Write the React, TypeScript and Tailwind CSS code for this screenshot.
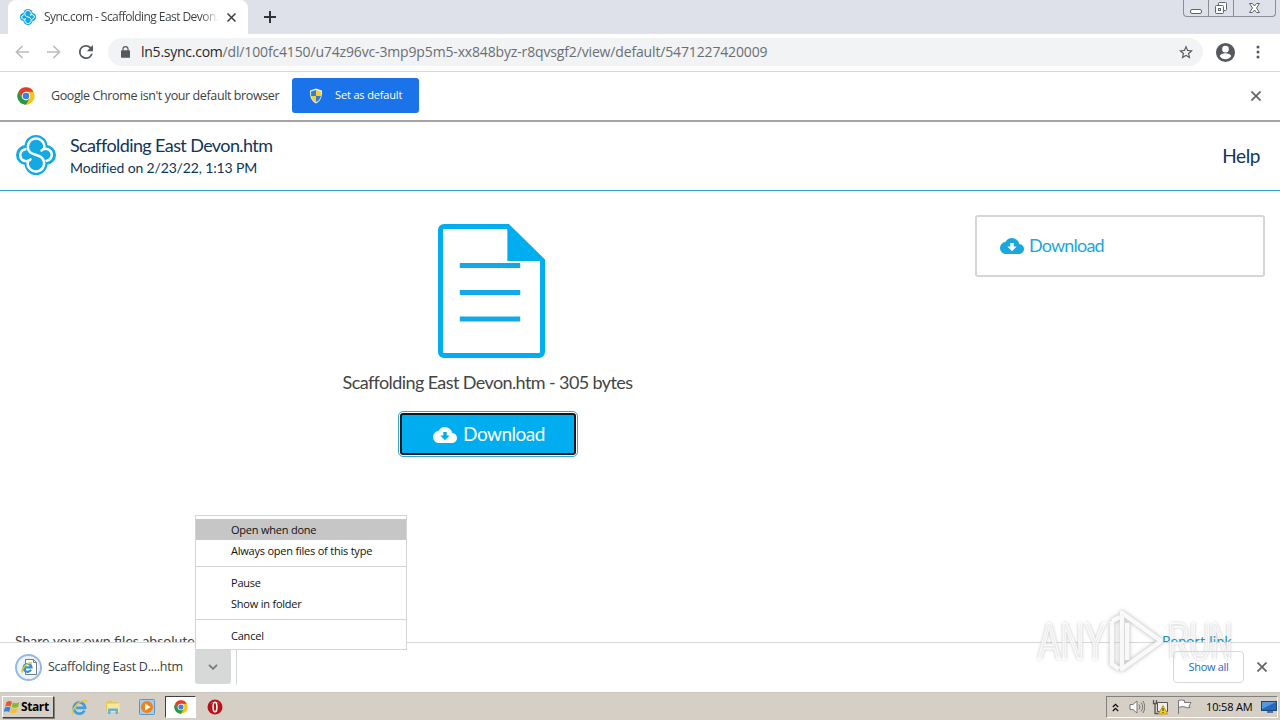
import { useState } from 'react'
import type { ReactNode } from 'react'

const MENU_GROUPS = [
  ['Open when done', 'Always open files of this type'],
  ['Pause', 'Show in folder'],
  ['Cancel'],
]

function SyncLogo({ className }: { className: string }) {
  return (
    <svg viewBox="0 0 40 40" className={className} fill="none">
      <g fill="#13a9e1">
        <circle cx="20" cy="11.500" r="11.500" />
        <circle cx="20" cy="28.500" r="11.500" />
        <circle cx="10" cy="20" r="10" />
        <circle cx="30" cy="20" r="10" />
      </g>
      <g stroke="#fff" strokeWidth="2.500" strokeLinecap="round">
        <path d="M28 14A8.200 8.200 0 1 0 14 17.200C17 20 22.500 19.500 26 22.800A8.200 8.200 0 1 1 12 26" />
        <path d="M9.500 14.200A6 6 0 1 0 14.500 24.300" />
        <path d="M30.500 25.800A6 6 0 1 0 25.500 15.700" />
      </g>
    </svg>
  )
}

function ChromeLogo({ className }: { className: string }) {
  return (
    <svg viewBox="0 0 24 24" className={className}>
      <circle cx="12" cy="12" r="11.500" fill="#fbc116" />
      <path d="M2.040 6.250A11.500 11.500 0 0 1 21.960 6.250H12L7 14.900Z" fill="#e33b2e" />
      <path d="M2.040 6.250A11.500 11.500 0 0 0 12 23.500L17 14.900 12 18 7 14.900Z" fill="#229a4a" />
      <circle cx="12" cy="12" r="5.700" fill="#fff" />
      <circle cx="12" cy="12" r="4.400" fill="#3f7de8" />
    </svg>
  )
}

function CloudDownload({ className, arrow }: { className: string; arrow: string }) {
  return (
    <svg viewBox="0 0 24 16" className={className}>
      <path d="M19.350 6.040A7.490 7.490 0 0 0 12 0C9.110 0 6.600 1.640 5.350 4.040A5.994 5.994 0 0 0 0 10c0 3.310 2.690 6 6 6h13c2.760 0 5-2.240 5-5 0-2.640-2.050-4.780-4.650-4.960z" fill="currentColor" />
      <path d="M10.300 5h3.400v3.600h3L12 13.300 7.300 8.600h3z" fill={arrow} />
    </svg>
  )
}

function Cross({ className }: { className: string }) {
  return (
    <svg viewBox="0 0 10 10" className={className} stroke="currentColor" strokeWidth="1.700">
      <path d="M.5.500l9 9M9.500.500l-9 9" />
    </svg>
  )
}

function IeLogo({ className }: { className: string }) {
  return (
    <svg viewBox="0 0 18 18" className={className} fill="none">
      <path d="M14.300 12.200A6 6 0 1 1 14.900 9.400H5.500" stroke="#3b9fe0" strokeWidth="2.800" />
      <path d="M2.500 16.200C-.5 14 4 6.500 9.500 3.300 13 1.200 16.800.3 16.800 3.700" stroke="#efc337" strokeWidth="1.500" />
    </svg>
  )
}

function WindowControls() {
  return (
    <div className="mr-1 flex h-[17px] w-[93px] rounded-b border border-t-0 border-[#8b8e95] text-[#62656b]">
      <div className="flex w-[25px] items-center justify-center border-r border-[#8b8e95]">
        <svg viewBox="0 0 14 14" className="h-3.5 w-3.5" fill="#fff" stroke="currentColor">
          <rect x="1.500" y="8.500" width="11" height="4" rx="1.500" />
        </svg>
      </div>
      <div className="flex w-[25px] items-center justify-center border-r border-[#8b8e95]">
        <svg viewBox="0 0 14 14" className="h-3.5 w-3.5" fill="#fff" stroke="currentColor">
          <rect x="4.500" y="1.500" width="8" height="8" rx="1" />
          <rect x="1.500" y="4.500" width="8" height="8" rx="1" />
          <rect x="4.500" y="7.500" width="2" height="2" />
        </svg>
      </div>
      <div className="flex flex-1 items-center justify-center">
        <svg viewBox="0 0 13 12" className="h-3 w-[13px]" fill="#fff" stroke="currentColor">
          <path d="M1.500 1.500h3l2 2.500 2-2.500h3l-3 4.500 3 4.500h-3l-2-2.500-2 2.500h-3l3-4.500z" />
        </svg>
      </div>
    </div>
  )
}

function TabStrip() {
  return (
    <div className="flex h-[34px] items-start bg-[#dee1e9] pl-2">
      <div className="flex h-[34px] w-[240px] items-center rounded-t-lg bg-white pl-3 pr-3">
        <SyncLogo className="h-4 w-4 shrink-0" />
        <div className="ml-2 w-[175px] overflow-hidden whitespace-nowrap bg-gradient-to-r from-[#3c4043] from-90% to-transparent bg-clip-text text-[12px] tracking-[-0.56px] text-transparent">
          Sync.com - Scaffolding East Devon.htm
        </div>
        <Cross className="ml-auto h-[9px] w-[9px] text-[#3c4043]" />
      </div>
      <svg viewBox="0 0 12 12" className="ml-4 mt-[11px] h-3 w-3" stroke="#303338" strokeWidth="2">
        <path d="M6 0v12M0 6h12" />
      </svg>
      <div className="ml-auto">
        <WindowControls />
      </div>
    </div>
  )
}

function Toolbar() {
  return (
    <div className="flex h-[38px] items-center border-b border-[#d6d8dc] bg-white pb-px pl-[15px] pr-5">
      <svg viewBox="0 0 14 14" className="h-3.5 w-3.5" fill="none" stroke="#babcbe" strokeWidth="1.700">
        <path d="M14 7H1.500M7.500 1L1.500 7l6 6" />
      </svg>
      <svg viewBox="0 0 14 14" className="ml-[18px] h-3.5 w-3.5" fill="none" stroke="#babcbe" strokeWidth="1.700">
        <path d="M0 7h12.500M6.500 1l6 6-6 6" />
      </svg>
      <svg viewBox="4 4 16 16" className="ml-[18px] h-3.5 w-3.5" fill="#55585d">
        <path d="M17.650 6.350A7.958 7.958 0 0 0 12 4a8 8 0 1 0 7.730 10h-2.080A6 6 0 1 1 12 6c1.660 0 3.140.69 4.220 1.780L13 11h7V4z" />
      </svg>
      <div className="ml-[15px] flex h-7 w-[1095px] items-center rounded-full bg-[#f1f3f4] pl-[13px] pr-2.5">
        <svg viewBox="0 0 10 13" className="h-3 w-[9px]" fill="#55585d">
          <path d="M1 4.500h8a1 1 0 0 1 1 1V12a1 1 0 0 1-1 1H1a1 1 0 0 1-1-1V5.500a1 1 0 0 1 1-1z" />
          <path d="M2.200 5V3.300a2.800 2.800 0 0 1 5.600 0V5" fill="none" stroke="#55585d" strokeWidth="1.300" />
        </svg>
        <span className="ml-[11px] whitespace-nowrap pb-0.5 text-[14px] tracking-[-0.15px] text-[#6b6f74]">
          <span className="tracking-[-0.25px] text-[#25282c]">ln5.sync.com</span>/dl/100fc4150/u74z96vc-3mp9p5m5-xx848byz-r8qvsgf2/view/default/5471227420009
        </span>
        <svg viewBox="2 2 20 19" className="ml-auto h-3.5 w-3.5" fill="#55585d">
          <path d="M22 9.240l-7.190-.62L12 2 9.190 8.630 2 9.240l5.460 4.730L5.820 21 12 17.270 18.180 21l-1.630-7.030L22 9.240zM12 15.400l-3.760 2.270 1-4.280-3.320-2.880 4.380-.38L12 6.100l1.710 4.040 4.380.38-3.320 2.880 1 4.280L12 15.400z" />
        </svg>
      </div>
      <svg viewBox="2 2 20 20" className="ml-[13px] h-[19px] w-[19px]" fill="#55585d">
        <path d="M12 2a10 10 0 1 0 0 20 10 10 0 0 0 0-20zm0 3a3.500 3.500 0 1 1 0 7 3.500 3.500 0 0 1 0-7zm0 14.200a7.200 7.200 0 0 1-6-3.200c.03-2 4-3.100 6-3.100s5.970 1.100 6 3.100a7.200 7.200 0 0 1-6 3.200z" />
      </svg>
      <svg viewBox="0 0 4 14" className="ml-auto h-3.5 w-1" fill="#55585d">
        <circle cx="2" cy="2" r="1.500" />
        <circle cx="2" cy="7" r="1.500" />
        <circle cx="2" cy="12" r="1.500" />
      </svg>
    </div>
  )
}

function DefaultBrowserBar() {
  return (
    <div className="flex h-[50px] items-center border-b-2 border-[#a3a3a3] bg-white pb-px pl-[17px] pr-[19px]">
      <ChromeLogo className="h-[18px] w-[18px]" />
      <span className="ml-4 w-[241px] whitespace-nowrap pt-0.5 text-[12.500px] tracking-[-0.39px] text-[#3c4043]">
        Google Chrome isn't your default browser
      </span>
      <button type="button" className="flex h-[35px] w-[127px] items-center rounded-[3px] bg-[#1a73e8] pl-4 text-[11px] tracking-[-0.15px] text-white">
        <svg viewBox="0 0 16 16" className="mr-[11px] h-4 w-4">
          <path d="M8 .5L14 2.500C14.300 8 13 13 8 15.500 3 13 1.700 8 2 2.500z" fill="#e9eef4" />
          <path d="M8 2v6H3.100L3 3.500z" fill="#3a7bd0" />
          <path d="M8 2v6h4.900L13 3.500z" fill="#f5cf2c" />
          <path d="M8 8v6.300C5 12.700 3.500 10.500 3.100 8z" fill="#f5cf2c" />
          <path d="M8 8v6.300c3-1.600 4.500-3.800 4.900-6.300z" fill="#3a7bd0" />
        </svg>
        Set as default
      </button>
      <Cross className="ml-auto h-2.5 w-2.5 text-[#5f6368]" />
    </div>
  )
}

function FileHeader() {
  return (
    <header className="flex h-[69px] shrink-0 items-center border-b border-[#2b9fcb] bg-white pl-4 pr-5 font-[Lato,sans-serif] text-[#0f3559]">
      <SyncLogo className="mb-0.5 h-10 w-10" />
      <div className="ml-[14px] whitespace-nowrap pt-px">
        <div className="text-[18px] leading-[23px] tracking-[-0.6px]">Scaffolding East Devon.htm</div>
        <div className="text-[14px] leading-[22px] tracking-[-0.15px]">Modified on 2/23/22, 1:13 PM</div>
      </div>
      <a className="ml-auto text-[19px] tracking-[-0.4px]">Help</a>
    </header>
  )
}

function FilePreview() {
  return (
    <main className="flex flex-1 flex-col overflow-hidden bg-white font-[Lato,sans-serif]">
      <div className="flex items-start pr-[15px]">
        <section className="flex w-[975px] flex-col items-center pt-[33px]">
          <svg viewBox="0 0 108 134" preserveAspectRatio="none" className="ml-[7px] h-[134px] w-[107px]" fill="none">
            <path d="M70.500 2.500H6a3.500 3.500 0 0 0-3.500 3.500v122a3.500 3.500 0 0 0 3.500 3.500h96a3.500 3.500 0 0 0 3.500-3.500V36.500z" stroke="#00adee" strokeWidth="5" />
            <path d="M70 0l37 37H70z" fill="#00adee" />
            <path d="M22 41.500h61M22 68.500h61M22 95h61" stroke="#13a9e8" strokeWidth="5" />
          </svg>
          <p className="mt-3 whitespace-nowrap text-[18px] leading-6 tracking-[-0.6px] text-[#444]">
            Scaffolding East Devon.htm - 305 bytes
          </p>
          <button
            type="button"
            className="mt-[19px] flex h-[42px] w-[176px] items-center justify-center rounded-[3px] border-2 border-[#0a1a22] bg-[#00adee] pl-[3px] text-[19px] tracking-[-0.5px] text-white outline outline-offset-1 outline-[#3aa6cf]"
          >
            <CloudDownload className="mr-1.5 mt-0.5 h-4 w-6" arrow="#00adee" />
            Download
          </button>
        </section>
        <aside className="mt-6 flex h-[62px] flex-1 items-center rounded-[3px] border-2 border-[#d5d6d8] pb-0.5 pl-[23px] text-[18px] tracking-[-0.8px] text-[#1aa7dc]">
          <CloudDownload className="mr-[5px] mt-0.5 h-4 w-6" arrow="#fff" />
          Download
        </aside>
      </div>
      <footer className="mt-auto -mb-[11px] flex h-[25px] items-center justify-between pl-[15px] pr-12 text-[14px]">
        <span className="text-[#444]">Share your own files absolutely free</span>
        <a className="relative z-40 tracking-[0.3px] text-[#1496c4]">Report link</a>
      </footer>
    </main>
  )
}

function DownloadMenu() {
  return (
    <div className="absolute bottom-[70px] left-[195px] z-20 w-[212px] border border-[#d4d4d4] bg-white py-[3px] text-[11px] tracking-[-0.22px] text-[#111]">
      {MENU_GROUPS.map((group, i) => (
        <div key={group[0]} className={i > 0 ? 'mt-[5px] border-t border-[#d4d4d4] pt-[5px]' : ''}>
          {group.map((label) => (
            <div
              key={label}
              className={`flex h-[21px] items-center pl-[35px] pt-0.5 ${label === 'Open when done' ? 'bg-[#c6c6c6]' : ''}`}
            >
              {label}
            </div>
          ))}
        </div>
      ))}
    </div>
  )
}

function DownloadShelf({ open, onToggle }: { open: boolean; onToggle: () => void }) {
  return (
    <div className="flex h-[50px] items-center border-t border-[#d6d8da] bg-white pb-px pl-[15px] pr-[13px]">
      <div className="flex h-[27px] w-[27px] items-center justify-center rounded-full border-2 border-[#94b9e7] bg-[#edf4fc]">
        <svg viewBox="0 0 18 18" className="h-[18px] w-[18px] shrink-0" fill="none">
          <path d="M5.500 1.500h8l3 3v12h-11z" fill="#fff" stroke="#76797e" />
          <path d="M13.500 1.500v3h3" stroke="#76797e" />
          <path d="M11 11.800A4 4 0 1 1 11.500 9.300H4.500" stroke="#3191d4" strokeWidth="2.200" />
          <path d="M2.500 14.500C.5 12 6 4.800 12 4.800" stroke="#e8c62c" strokeWidth="1.500" />
        </svg>
      </div>
      <span className="ml-1.5 w-[147px] whitespace-nowrap text-[12.500px] tracking-[-0.24px] text-[#3c4043]">Scaffolding East D....htm</span>
      <button type="button" aria-expanded={open} onClick={onToggle} className="mb-px flex h-[35px] w-9 items-center justify-center rounded-[3px] bg-[#d7d9d9]">
        <svg viewBox="0 0 10 6" className="h-1.5 w-2.5" fill="none" stroke="#777b7e" strokeWidth="1.800">
          <path d="M1 .8l4 4 4-4" />
        </svg>
      </button>
      <div className="ml-[5px] h-9 w-px bg-[#d6d8da]" />
      <button type="button" className="relative z-40 ml-auto h-8 w-[71px] rounded border border-[#d6d8dc] text-[11px] tracking-[-0.3px] text-[#2867c7]">
        Show all
      </button>
      <Cross className="ml-[13px] h-2.5 w-2.5 text-[#5f6368]" />
    </div>
  )
}

function TaskItem({ children }: { children: ReactNode }) {
  return <div className="flex h-[22px] w-[34px] items-center justify-center">{children}</div>
}

function Taskbar() {
  return (
    <div className="flex h-7 items-center border-t border-[#c9c6c0] bg-[#d6cfc6] pt-px">
      <button type="button" className="ml-0.5 flex h-[22px] w-[52px] items-center border border-b-[#404040] border-l-white border-r-[#404040] border-t-white bg-[#d6cfc6] pl-px text-[12px] font-bold tracking-[-0.4px] text-black shadow-[1px_1px_0_#808080]">
        <svg viewBox="0 0 16 16" className="mr-px h-4 w-4 shrink-0">
          <path d="M2.500 3C5 1.500 6.500 2 8 3L6.700 7.500C5 6.500 3.500 6.500 1.200 7.500z" fill="#e7592b" />
          <path d="M9 3.400c2 1 4 1 6.300-.2L14 8c-2.500 1-4.500.9-6.300-.1z" fill="#7fba32" />
          <path d="M1 8.500c2-1 4-1 5.500 0L5.200 13C3.500 12 2 12-.3 13z" fill="#3684d8" />
          <path d="M7.400 8.900c2 1 4 1 6.300.1l-1.300 4.600c-2.500 1-4.500.9-6.300-.1z" fill="#f5c22d" />
        </svg>
        Start
      </button>
      <div className="ml-2 flex items-center">
        <TaskItem><IeLogo className="h-[17px] w-[17px]" /></TaskItem>
        <TaskItem>
          <svg viewBox="0 0 16 16" className="h-4 w-4">
            <path d="M1 3l5-1.500 1 1.500h6v10H1z" fill="#e5c45c" />
            <path d="M2 4.500h12.500V13H2z" fill="#f8e79a" />
            <path d="M3 15V9.500h10V15h-2.500v-3h-5v3z" fill="#64b3dc" />
          </svg>
        </TaskItem>
        <TaskItem>
          <svg viewBox="0 0 16 16" className="h-4 w-4">
            <rect x=".5" y=".5" width="15" height="15" rx="1" fill="#a6cdeb" stroke="#5796c8" />
            <circle cx="8" cy="8" r="6" fill="#ef8219" />
            <path d="M6 4.500L11.500 8 6 11.500z" fill="#fff" />
          </svg>
        </TaskItem>
        <div className="ml-px mr-0.5 flex h-[22px] w-[31px] items-center justify-center border border-b-white border-l-[#404040] border-r-white border-t-[#404040] bg-white">
          <ChromeLogo className="h-3.5 w-3.5" />
        </div>
        <TaskItem>
          <svg viewBox="0 0 16 16" className="h-4 w-4">
            <circle cx="8" cy="8" r="7.500" fill="#b7131a" />
            <path d="M3 5a6 5 0 0 1 10 0q-5-3-10 0z" fill="#e0605c" />
            <ellipse cx="8" cy="8" rx="1.900" ry="4.800" fill="#b7131a" stroke="#fff" strokeWidth="1.600" />
          </svg>
        </TaskItem>
      </div>
      <div className="ml-auto mr-0.5 flex h-[22px] w-[172px] items-center border border-b-white border-l-[#808080] border-r-white border-t-[#808080] pl-[5px] text-[11px] text-black">
        <svg viewBox="0 0 7 9" className="h-[9px] w-[7px]" fill="none" stroke="#111" strokeWidth="1.300">
          <path d="M.8 4l2.700-2.700L6.200 4M.8 8l2.700-2.700L6.200 8" />
        </svg>
        <svg viewBox="0 0 16 16" className="ml-[10px] h-4 w-4" fill="none" stroke="#777">
          <path d="M1 5.500h3L8 2v12l-4-3.500H1z" fill="#fff" />
          <path d="M10 5.500q2 2.500 0 5M12 3.500q3.500 4.500 0 9M14 2q3.500 6 0 12" />
        </svg>
        <svg viewBox="0 0 16 16" className="ml-[7px] h-4 w-4" fill="none" stroke="#555">
          <path d="M5.500 3.500h10v9h-10z" fill="#eee" />
          <path d="M1.500 1v3.500h3V1M3 4.500v10h4" strokeWidth="1.300" />
          <path d="M11 6.500l4.500 8.500h-9z" fill="#f7d51d" stroke="#c19b16" />
          <path d="M11 9v3M11 13v1" stroke="#222" />
        </svg>
        <svg viewBox="0 0 16 16" className="ml-2 h-4 w-4" fill="#fff" stroke="#777">
          <path d="M2.500 1v14" />
          <path d="M2.500 1.500q3-1 6 0v2h6.500l-2 3.500 1 1.500q-3 1-5-.5-3-1-6.500 .5z" />
        </svg>
        <span className="ml-[14px] whitespace-nowrap tracking-[-0.15px]">10:58 AM</span>
        <svg viewBox="0 0 16 14" className="ml-auto h-3.5 w-4">
          <rect x=".5" y="1.500" width="15" height="9" fill="#2668bd" stroke="#194580" />
          <path d="M1 2h14L1 9z" fill="#5598df" />
          <path d="M6 11h6v2H6z" fill="#56739a" />
        </svg>
      </div>
    </div>
  )
}

function Watermark() {
  return (
    <div className="pointer-events-none absolute left-[1038px] top-[606px] z-30 flex h-[70px] w-[200px] items-center font-['Liberation_Sans',sans-serif] text-[52px] leading-none text-white/75 [-webkit-text-stroke:2px_rgba(255,255,255,0.75)] [text-shadow:0_0_4px_#999]">
      <span className="w-[70px] origin-left scale-x-[0.640]">ANY</span>
      <svg viewBox="0 0 58 66" className="h-[66px] w-[58px] shrink-0 drop-shadow-[0_0_2px_#aaa]" fill="none" stroke="#fff" strokeOpacity=".9" strokeWidth="4.500" strokeLinejoin="round">
        <path d="M14 5L53 33 14 61zM19 15v37M4 13v43l7 5M4 13l8-4" />
      </svg>
      <span className="ml-0.5 w-[66px] origin-left scale-x-[0.570]">RUN</span>
    </div>
  )
}

export default function App() {
  const [menuOpen, setMenuOpen] = useState(true)

  return (
    <div className="relative flex h-[720px] w-[1280px] flex-col overflow-hidden bg-white font-['Open_Sans',sans-serif]">
      <TabStrip />
      <Toolbar />
      <DefaultBrowserBar />
      <FileHeader />
      <FilePreview />
      <DownloadShelf open={menuOpen} onToggle={() => setMenuOpen((v) => !v)} />
      <Taskbar />
      {menuOpen && <DownloadMenu />}
      <Watermark />
    </div>
  )
}
